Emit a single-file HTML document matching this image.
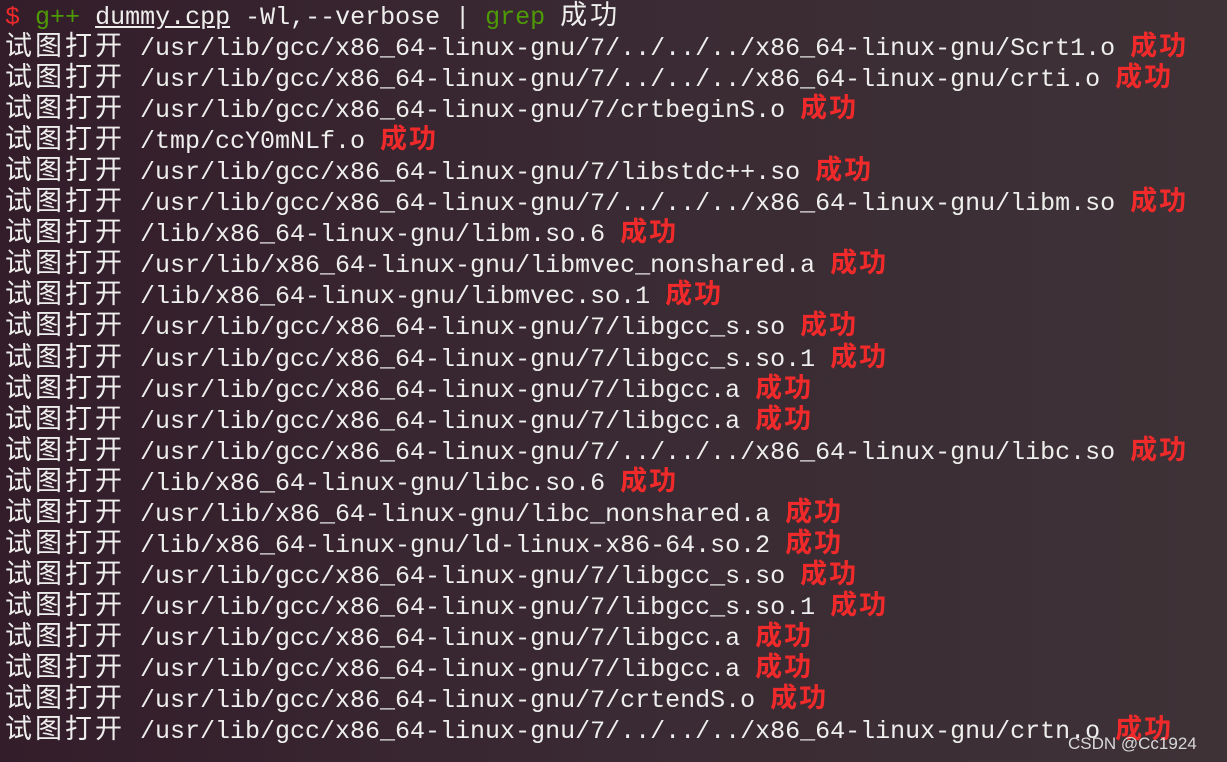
<!DOCTYPE html>
<html><head><meta charset="utf-8"><style>
html,body{margin:0;padding:0;}
body{width:1227px;height:762px;overflow:hidden;background:linear-gradient(90deg,#331d2a 0%,#3a2a33 50%,#3e3237 100%);}
pre{margin:0;padding:2px 0 0 5px;font-family:"Liberation Mono","Noto Sans CJK SC",monospace;font-size:25px;line-height:31.05px;color:#eeeeec;white-space:pre;}
.c{font-family:"Noto Sans CJK SC",sans-serif;font-size:27px;letter-spacing:3px;line-height:20px;}
.r{color:#f02a2a;font-weight:bold;font-family:"Noto Sans CJK SC",sans-serif;font-size:27px;letter-spacing:2px;line-height:20px;}
.g{color:#4e9a06;}
.d{color:#f02a2a;}
.u{text-decoration:underline;}
.wm{position:absolute;left:1068px;top:734px;font-family:"Liberation Sans",sans-serif;font-size:17px;color:#d8d8d8;}
</style></head><body>
<pre><span class="d">$</span> <span class="g">g++</span> <span class="u">dummy.cpp</span> -Wl,--verbose | <span class="g">grep</span> <span class="c">成功</span>
<span class="c">试图打开</span> /usr/lib/gcc/x86_64-linux-gnu/7/../../../x86_64-linux-gnu/Scrt1.o <span class="r">成功</span>
<span class="c">试图打开</span> /usr/lib/gcc/x86_64-linux-gnu/7/../../../x86_64-linux-gnu/crti.o <span class="r">成功</span>
<span class="c">试图打开</span> /usr/lib/gcc/x86_64-linux-gnu/7/crtbeginS.o <span class="r">成功</span>
<span class="c">试图打开</span> /tmp/ccY0mNLf.o <span class="r">成功</span>
<span class="c">试图打开</span> /usr/lib/gcc/x86_64-linux-gnu/7/libstdc++.so <span class="r">成功</span>
<span class="c">试图打开</span> /usr/lib/gcc/x86_64-linux-gnu/7/../../../x86_64-linux-gnu/libm.so <span class="r">成功</span>
<span class="c">试图打开</span> /lib/x86_64-linux-gnu/libm.so.6 <span class="r">成功</span>
<span class="c">试图打开</span> /usr/lib/x86_64-linux-gnu/libmvec_nonshared.a <span class="r">成功</span>
<span class="c">试图打开</span> /lib/x86_64-linux-gnu/libmvec.so.1 <span class="r">成功</span>
<span class="c">试图打开</span> /usr/lib/gcc/x86_64-linux-gnu/7/libgcc_s.so <span class="r">成功</span>
<span class="c">试图打开</span> /usr/lib/gcc/x86_64-linux-gnu/7/libgcc_s.so.1 <span class="r">成功</span>
<span class="c">试图打开</span> /usr/lib/gcc/x86_64-linux-gnu/7/libgcc.a <span class="r">成功</span>
<span class="c">试图打开</span> /usr/lib/gcc/x86_64-linux-gnu/7/libgcc.a <span class="r">成功</span>
<span class="c">试图打开</span> /usr/lib/gcc/x86_64-linux-gnu/7/../../../x86_64-linux-gnu/libc.so <span class="r">成功</span>
<span class="c">试图打开</span> /lib/x86_64-linux-gnu/libc.so.6 <span class="r">成功</span>
<span class="c">试图打开</span> /usr/lib/x86_64-linux-gnu/libc_nonshared.a <span class="r">成功</span>
<span class="c">试图打开</span> /lib/x86_64-linux-gnu/ld-linux-x86-64.so.2 <span class="r">成功</span>
<span class="c">试图打开</span> /usr/lib/gcc/x86_64-linux-gnu/7/libgcc_s.so <span class="r">成功</span>
<span class="c">试图打开</span> /usr/lib/gcc/x86_64-linux-gnu/7/libgcc_s.so.1 <span class="r">成功</span>
<span class="c">试图打开</span> /usr/lib/gcc/x86_64-linux-gnu/7/libgcc.a <span class="r">成功</span>
<span class="c">试图打开</span> /usr/lib/gcc/x86_64-linux-gnu/7/libgcc.a <span class="r">成功</span>
<span class="c">试图打开</span> /usr/lib/gcc/x86_64-linux-gnu/7/crtendS.o <span class="r">成功</span>
<span class="c">试图打开</span> /usr/lib/gcc/x86_64-linux-gnu/7/../../../x86_64-linux-gnu/crtn.o <span class="r">成功</span></pre>
<div class="wm">CSDN @Cc1924</div>
</body></html>
